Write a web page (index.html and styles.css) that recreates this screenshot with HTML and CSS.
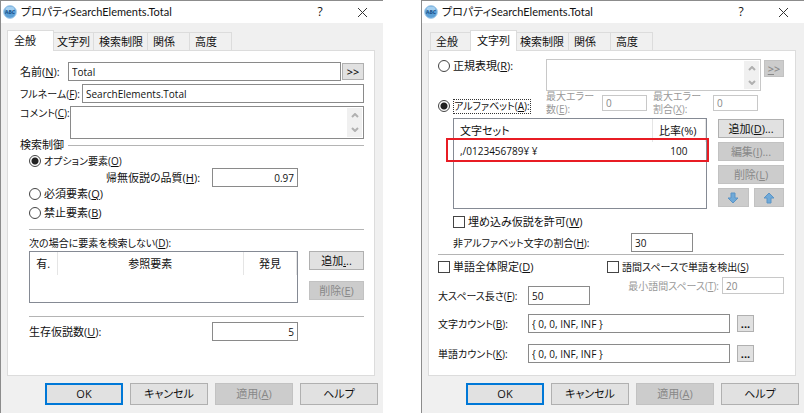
FILE: index.html
```html
<!DOCTYPE html>
<html lang="ja">
<head>
    <meta charset="UTF-8">
    <meta name="viewport" content="width=device-width, initial-scale=1.0">
    <title>プロパティSearchElements.Total</title>
    <link rel="stylesheet" href="styles.css">
</head>
<body>
    <!-- General tab -->
    <section class="dialog">
        <header class="titlebar">
            <svg class="app-icon" viewBox="0 0 14 14">
                <circle cx="7" cy="7" r="6.4" fill="#5b9fd6" stroke="#a9cdea"/>
                <ellipse cx="7" cy="4" rx="4.6" ry="2.6" fill="#a5d0f0"/>
                <text x="7" y="9.2" class="app-icon-text">ABC</text>
            </svg>
            <h1>プロパティSearchElements.Total</h1>
            <button class="title-button" aria-label="ヘルプ">?</button>
            <button class="title-button" aria-label="閉じる">
                <svg width="11" height="11" viewBox="0 0 11 11"><path d="M1 1l9 9M10 1l-9 9" stroke="#333" fill="none"/></svg>
            </button>
        </header>
        <nav class="tabs">
            <button class="tab active">全般</button>
            <button class="tab">文字列</button>
            <button class="tab wide">検索制限</button>
            <button class="tab">関係</button>
            <button class="tab">高度</button>
        </nav>
        <div class="panel general">
            <div class="row">
                <label class="name-label" for="name">名前(<u>N</u>):</label>
                <input class="fill" id="name" type="text" value="Total">
                <button class="more">&gt;&gt;</button>
            </div>
            <div class="row">
                <label class="fullname-label kana" for="fullname">フルネーム(<u>F</u>):</label>
                <input class="fill" id="fullname" type="text" value="SearchElements.Total">
            </div>
            <div class="row comment-row">
                <label class="name-label kana" for="comment">コメント(<u>C</u>):</label>
                <div class="memo">
                    <textarea id="comment"></textarea>
                    <div class="scroll">
                        <svg width="8" height="5" viewBox="0 0 8 5"><path d="M1 4l3-3 3 3"/></svg>
                        <svg width="8" height="5" viewBox="0 0 8 5"><path d="M1 1l3 3 3-3"/></svg>
                    </div>
                </div>
            </div>
            <h2 class="group-title">検索制御</h2>
            <div class="group">
                <label class="option kana"><input type="radio" name="kind" checked>オプション要素(<u>O</u>)</label>
                <div class="row quality">
                    <label for="quality">帰無仮説の品質(<u>H</u>):</label>
                    <input class="number" id="quality" type="text" value="0.97">
                </div>
                <label class="option"><input type="radio" name="kind">必須要素(<u>Q</u>)</label>
                <label class="option last"><input type="radio" name="kind">禁止要素(<u>B</u>)</label>
                <hr>
                <p class="caption kana">次の場合に要素を検索しない(<u>D</u>):</p>
                <div class="list-row">
                    <div class="listbox">
                        <table>
                            <thead>
                                <tr><th class="col-on">有.</th><th>参照要素</th><th class="col-found">発見</th></tr>
                            </thead>
                        </table>
                    </div>
                    <div class="side-buttons">
                        <button>追加<u>.</u>..</button>
                        <button disabled>削除(<u>E</u>)</button>
                    </div>
                </div>
                <hr class="after-list">
                <div class="row hypotheses">
                    <label for="hypotheses">生存仮説数(<u>U</u>):</label>
                    <input class="number" id="hypotheses" type="text" value="5">
                </div>
            </div>
        </div>
        <footer class="actions">
            <button class="default">OK</button>
            <button>キャンセル</button>
            <button disabled>適用(<u>A</u>)</button>
            <button>ヘルプ</button>
        </footer>
    </section>

    <!-- String tab -->
    <section class="dialog">
        <header class="titlebar">
            <svg class="app-icon" viewBox="0 0 14 14">
                <circle cx="7" cy="7" r="6.4" fill="#5b9fd6" stroke="#a9cdea"/>
                <ellipse cx="7" cy="4" rx="4.6" ry="2.6" fill="#a5d0f0"/>
                <text x="7" y="9.2" class="app-icon-text">ABC</text>
            </svg>
            <h1>プロパティSearchElements.Total</h1>
            <button class="title-button" aria-label="ヘルプ">?</button>
            <button class="title-button" aria-label="閉じる">
                <svg width="11" height="11" viewBox="0 0 11 11"><path d="M1 1l9 9M10 1l-9 9" stroke="#333" fill="none"/></svg>
            </button>
        </header>
        <nav class="tabs">
            <button class="tab">全般</button>
            <button class="tab active">文字列</button>
            <button class="tab wide">検索制限</button>
            <button class="tab">関係</button>
            <button class="tab">高度</button>
        </nav>
        <div class="panel string">
            <div class="regex-row">
                <label class="option"><input type="radio" name="mode">正規表現(<u>R</u>):</label>
                <div class="memo disabled">
                    <textarea aria-label="正規表現" disabled></textarea>
                    <div class="scroll">
                        <svg width="8" height="5" viewBox="0 0 8 5"><path d="M1 4l3-3 3 3"/></svg>
                        <svg width="8" height="5" viewBox="0 0 8 5"><path d="M1 1l3 3 3-3"/></svg>
                    </div>
                </div>
                <button class="more" disabled><u>&gt;</u>&gt;</button>
            </div>
            <div class="alphabet-row">
                <label class="option kana"><input type="radio" name="mode" checked><span class="focused">アルファベット(<u>A</u>):</span></label>
                <label class="error-label kana" for="errors">最大エラー<br>数(<u>E</u>):</label>
                <input class="error-input" id="errors" type="text" value="0" disabled>
                <label class="error-label second kana" for="ratio">最大エラー<br>割合(<u>X</u>):</label>
                <input class="error-input" id="ratio" type="text" value="0" disabled>
            </div>
            <div class="list-row">
                <div class="listbox">
                    <table>
                        <thead>
                            <tr><th>文字セット</th><th class="col-rate">比率(%)</th></tr>
                        </thead>
                        <tbody>
                            <tr><td>,/0123456789¥ ¥</td><td class="col-rate">100</td></tr>
                        </tbody>
                    </table>
                    <div class="highlight"></div>
                </div>
                <div class="side-buttons">
                    <button>追加(<u>D</u>)...</button>
                    <button disabled>編集(<u>I</u>)...</button>
                    <button disabled>削除(<u>L</u>)</button>
                    <div class="arrows">
                        <button aria-label="下へ" disabled><svg width="12" height="12" viewBox="0 0 12 12"><path d="M4 1h4v5h3L6 11 1 6h3z"/></svg></button>
                        <button aria-label="上へ" disabled><svg width="12" height="12" viewBox="0 0 12 12"><path d="M4 11h4V6h3L6 1 1 6h3z"/></svg></button>
                    </div>
                </div>
            </div>
            <label class="option embedded"><input type="checkbox">埋め込み仮説を許可(<u>W</u>)</label>
            <div class="row non-alphabet">
                <label class="kana" for="nonalpha">非アルファベット文字の割合(<u>H</u>):</label>
                <input class="short" id="nonalpha" type="text" value="30">
            </div>
            <hr>
            <div class="checks">
                <label class="option"><input type="checkbox">単語全体限定(<u>D</u>)</label>
                <label class="option kana"><input type="checkbox">語間スペースで単語を検出(<u>S</u>)</label>
            </div>
            <div class="spaces">
                <div class="row max-space">
                    <label class="count-label kana" for="maxspace">大スペース長さ(<u>F</u>):</label>
                    <input class="short" id="maxspace" type="text" value="50">
                </div>
                <div class="row min-space">
                    <label class="kana" for="minspace">最小語間スペース(<u>T</u>):</label>
                    <input class="short" id="minspace" type="text" value="20" disabled>
                </div>
            </div>
            <div class="row count">
                <label class="count-label kana" for="chars">文字カウント(<u>B</u>):</label>
                <input class="fill" id="chars" type="text" value="{ 0, 0, INF, INF }">
                <button class="dots">...</button>
            </div>
            <div class="row count">
                <label class="count-label kana" for="words">単語カウント(<u>K</u>):</label>
                <input class="fill" id="words" type="text" value="{ 0, 0, INF, INF }">
                <button class="dots">...</button>
            </div>
        </div>
        <footer class="actions">
            <button class="default">OK</button>
            <button>キャンセル</button>
            <button disabled>適用(<u>A</u>)</button>
            <button>ヘルプ</button>
        </footer>
    </section>
</body>
</html>
```

FILE: styles.css
```css
* {
    box-sizing: border-box;
}

body {
    margin: 0;
    min-height: 100vh;
    display: flex;
    gap: 38px;
    background: #fff;
    color: #111;
    font-family: "Open Sans", "Noto Sans CJK JP", sans-serif;
    font-size: 11px;
    line-height: 14px;
    font-feature-settings: "palt";
}

h1, h2, p {
    margin: 0;
    font-size: 11px;
    font-weight: normal;
}

button, input, textarea {
    margin: 0;
    font: inherit;
    font-feature-settings: inherit;
    color: inherit;
}

label {
    white-space: nowrap;
}

.kana {
    font-size: 10px;
}

hr {
    width: 100%;
    height: 1px;
    margin: 0;
    border: none;
    background: #b4b4b4;
}

/* Window frame */
.dialog {
    flex: 1;
    min-width: 0;
    display: flex;
    flex-direction: column;
    background: #f0f0f0;
    border-top: 1px solid #8c8c8c;
    border-left: 1px solid #8c8c8c;
}

.titlebar {
    display: flex;
    align-items: center;
    height: 22px;
    padding: 0 14px 0 2px;
    background: #fff;
}

.titlebar h1 {
    flex: 1;
    margin-left: 4px;
    font-family: Lato, "Noto Sans CJK JP", sans-serif;
}

.app-icon {
    width: 14px;
    height: 14px;
}

.app-icon-text {
    font: bold 5px "Open Sans", sans-serif;
    fill: #174e86;
    text-anchor: middle;
}

.title-button {
    width: 14px;
    height: 16px;
    margin-left: 28px;
    padding: 0;
    border: none;
    background: none;
    display: flex;
    align-items: center;
    justify-content: center;
    font-size: 12px;
}

/* Tabs */
.tabs {
    display: flex;
    align-items: flex-end;
    height: 27px;
    padding-left: 8px;
}

.tab {
    width: 43px;
    height: 18px;
    margin-right: -1px;
    padding: 0 0 0 5px;
    border: 1px solid #dcdcdc;
    border-bottom: none;
    background: #f0f0f0;
    text-align: left;
}

.tab.wide {
    width: 55px;
}

.tab.active {
    position: relative;
    z-index: 1;
    width: 47px;
    height: 21px;
    margin: 0 -3px -1px -2px;
    padding-left: 6px;
    background: #fff;
}

.panel {
    flex: 1;
    margin: 0 8px 0 6px;
    border: 1px solid #dcdcdc;
    background: #fff;
}

/* Fields */
.row {
    display: flex;
    align-items: center;
    height: 19px;
}

input[type="text"] {
    min-width: 0;
    height: 19px;
    padding: 0 3px;
    border: 1px solid #8a8a8a;
    background: #fff;
    font-size: 10px;
}

.fill {
    flex: 1;
}

input[type="text"]:disabled {
    border-color: #c8c8c8;
    color: #888;
    background: #fff;
}

.memo {
    flex: 1;
    display: flex;
    padding: 1px;
    border: 1px solid #8a8a8a;
}

.memo.disabled {
    border-color: #c8c8c8;
}

.memo textarea {
    flex: 1;
    min-width: 0;
    height: 100%;
    padding: 0 3px;
    border: none;
    resize: none;
    overflow: hidden;
    background: none;
}

.scroll {
    width: 15px;
    display: flex;
    flex-direction: column;
    align-items: center;
    justify-content: space-around;
    background: #f0f0f0;
}

.scroll path {
    fill: none;
    stroke: #b0b0b0;
    stroke-width: 2;
}

.option {
    display: flex;
    align-items: center;
    height: 14px;
}

input[type="radio"], input[type="checkbox"] {
    appearance: none;
    flex: none;
    width: 12px;
    height: 12px;
    margin-right: 3px;
    border: 1px solid #444;
    background: #fff;
}

input[type="radio"] {
    border-radius: 50%;
}

input[type="radio"]:checked {
    background: radial-gradient(circle, #222 0 3px, #fff 4px);
}

/* Buttons */
.more, .dots, .side-buttons button, .actions button {
    padding: 0;
    border: 1px solid #b0b0b0;
    background: #e1e1e1;
}

.more {
    width: 22px;
    height: 17px;
    margin-left: 1px;
    font-weight: 600;
    line-height: 12px;
}

.dots {
    width: 17px;
    height: 17px;
    margin-left: 7px;
    font-weight: bold;
    line-height: 12px;
}

.panel button:disabled, .actions button:disabled {
    border-color: #c2c2c2;
    background: #ccc;
    color: #888;
}

.actions {
    display: flex;
    justify-content: flex-end;
    gap: 7px;
    padding: 7px 5px 8px 0;
}

.actions button {
    width: 78px;
    height: 22px;
}

.actions .default {
    border: 2px solid #0078d7;
}

/* Lists with a column of buttons beside them */
.list-row {
    display: flex;
    gap: 11px;
}

.listbox {
    position: relative;
    flex: 1;
    border: 1px solid #858a94;
}

.listbox table {
    width: 100%;
    border-collapse: collapse;
    table-layout: fixed;
}

.listbox th {
    height: 23px;
    padding: 0;
    font-weight: normal;
    border-right: 1px solid #e5e5e5;
}

.side-buttons {
    display: flex;
    flex-direction: column;
}

.side-buttons button {
    height: 19px;
}

/* General tab */
.general {
    padding: 11px 10px 0 12px;
}

.general > .row {
    margin-bottom: 3px;
}

.name-label {
    min-width: 48px;
}

.fullname-label {
    min-width: 62px;
}

.general > .comment-row {
    height: 33px;
    margin-bottom: 0;
    align-items: stretch;
}

.group-title {
    display: flex;
    align-items: center;
    gap: 4px;
    height: 12px;
}

.group-title::after {
    content: "";
    flex: 1;
    height: 1px;
    background: #b4b4b4;
}

.group {
    padding: 3px 0 0 9px;
}

.quality {
    padding-left: 77px;
}

.quality, .hypotheses {
    justify-content: space-between;
    padding-right: 66px;
}

.number {
    width: 86px;
    text-align: right;
}

.group .last {
    margin: 5px 0 9px;
}

.caption {
    padding: 6px 0 1px;
}

.general .listbox {
    height: 52px;
}

.general .side-buttons {
    width: 55px;
    gap: 11px;
}

.col-on {
    width: 27px;
}

.col-found {
    width: 53px;
}

.after-list {
    margin: 13px 0 5px;
}

/* String tab */
.string {
    padding: 8px 11px 0 9px;
}

.regex-row {
    display: grid;
    grid-template-columns: 108px 1fr 23px;
    height: 30px;
}

.regex-row .more {
    width: 20px;
    margin: 1px 0 0 3px;
}

.alphabet-row {
    display: flex;
    align-items: center;
    margin: 1px 0 2px;
    line-height: 13px;
}

.alphabet-row .option {
    width: 108px;
    padding-top: 6px;
}

.focused {
    border: 1px dotted #333;
}

.error-label {
    width: 56px;
    color: #999;
}

.error-label.second {
    width: 60px;
    margin-left: 6px;
}

.alphabet-row .error-input {
    width: 45px;
    height: 16px;
}

.min-space label {
    color: #999;
}

.string .list-row {
    margin-left: 15px;
}

.string .listbox {
    height: 91px;
}

.string .listbox th {
    text-align: left;
    padding-left: 6px;
}

.string .listbox td {
    height: 18px;
    padding: 0 6px;
    font-size: 10px;
}

.listbox .col-rate {
    width: 53px;
}

.string .listbox td.col-rate {
    padding-right: 18px;
    text-align: right;
}

/* Marks the character set row */
.highlight {
    position: absolute;
    top: 19px;
    left: -8px;
    right: -3px;
    height: 24px;
    border: 2px solid #e81c24;
}

.string .side-buttons {
    width: 66px;
    padding-top: 1px;
    gap: 4px;
}

.arrows {
    display: grid;
    grid-template-columns: 1fr 1fr;
    gap: 5px;
}

.arrows button {
    display: flex;
    align-items: center;
    justify-content: center;
}

.arrows path {
    fill: #6fa9d8;
    stroke: #5a94c6;
}

.embedded {
    margin: 6px 0 4px 15px;
}

.non-alphabet {
    justify-content: space-between;
    padding: 0 91px 0 15px;
    margin-bottom: 2px;
}

.short {
    width: 62px;
}

.checks {
    display: grid;
    grid-template-columns: 169px 1fr;
    margin-top: 5px;
}

.spaces {
    display: flex;
    justify-content: space-between;
    margin: 2px 0 9px;
}

.max-space {
    margin-top: 10px;
}

.min-space {
    gap: 3px;
}

.min-space .short {
    height: 17px;
}

.count-label {
    width: 90px;
}

.count {
    padding-right: 30px;
    margin-bottom: 11px;
}
```
